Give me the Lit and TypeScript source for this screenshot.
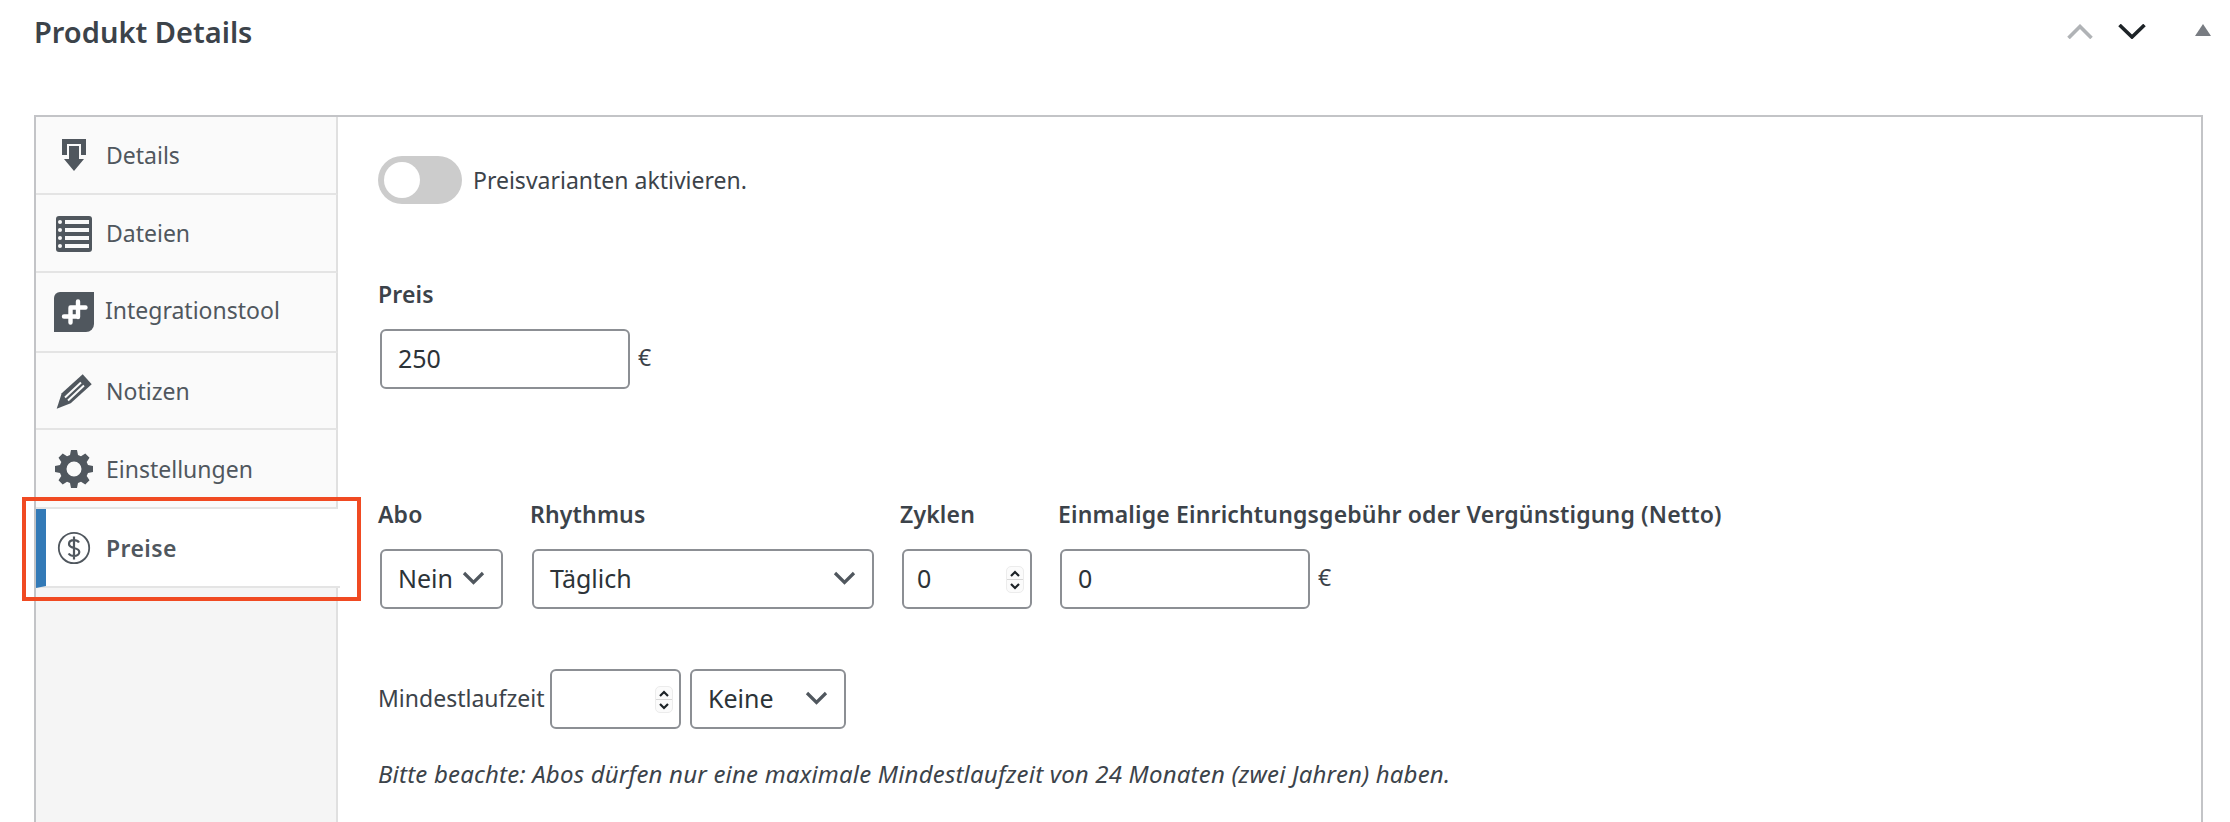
import { LitElement, html, css, svg } from "lit";
import { customElement } from "lit/decorators.js";

const chev = svg`<path d="M2 2l9.500 9.500L21 2" fill="none" stroke="#50575e" stroke-width="3.200"/>`;
const icons: Record<string, unknown> = {
  details: svg`<svg width="40" height="40" viewBox="0 0 40 40"><path fill="#50575e" d="M8 4h24v16h-5V9H13v11H8z"/><path fill="#50575e" d="M15 11h10v13h5L20 36 10 24h5z"/></svg>`,
  files: svg`<svg width="40" height="40" viewBox="0 0 40 40"><rect x="2" y="3" width="36" height="36" rx="3" fill="#50575e"/><g fill="#fafafa"><rect x="11" y="7" width="24" height="4"/><rect x="11" y="15" width="24" height="4"/><rect x="11" y="23" width="24" height="4"/><rect x="11" y="31" width="24" height="4"/><circle cx="6" cy="9" r="2"/><circle cx="6" cy="17" r="2"/><circle cx="6" cy="25" r="2"/><circle cx="6" cy="33" r="2"/></g></svg>`,
  integration: svg`<svg width="40" height="40" viewBox="0 0 40 40"><path fill="#50575e" d="M6 0h34v32a8 8 0 0 1-8 8H0V6a6 6 0 0 1 6-6z"/><path fill="none" stroke="#fff" stroke-width="4.400" stroke-linecap="round" d="M16.500 16v14.500M24 9.500V25M16.500 15.500h15M10 24.500h14"/></svg>`,
  notes: svg`<svg width="40" height="40" viewBox="0 0 40 40"><path fill="#50575e" d="M2.700 37.700L7.700 22.300 28.700 3.300 37.700 13.300 16.700 32.300z"/><path fill="none" stroke="#fafafa" stroke-width="2" d="M11 26.500L27 11.500M14 29.500L30 14.500"/></svg>`,
  settings: svg`<svg width="40" height="40" viewBox="0 0 40 40"><path fill="#50575e" fill-rule="evenodd" d="M17 3h6l1 5 3 1.300 4.300-2.800 4.200 4.200-2.800 4.300L34 18l5 1v6l-5 1-1.300 3 2.800 4.300-4.200 4.200-4.300-2.800-3 1.300-1 5h-6l-1-5-3-1.300-4.300 2.800-4.200-4.200 2.800-4.300L6 26l-5-1v-6l5-1 1.300-3-2.800-4.300 4.200-4.200 4.300 2.800 3-1.300zM20 14.500a7 7 0 1 0 0 15 7 7 0 0 0 0-15z" transform="translate(0 -2)"/></svg>`,
  price: svg`<svg width="40" height="40" viewBox="0 0 40 40"><circle cx="20" cy="20" r="15.200" fill="none" stroke="#50575e" stroke-width="1.800"/><path fill="none" stroke="#50575e" stroke-width="2.200" d="M25 14.500c-1-1.500-3-2.300-5-2.300-3 0-5 1.600-5 3.900 0 5.400 10.300 2.500 10.300 8 0 2.300-2.300 3.900-5.300 3.900-2.300 0-4.300-.8-5.400-2.500M20 8.500v23"/></svg>`,
};

const items = [
  { key: "details", label: "Details", h: 76, cls: "" },
  { key: "files", label: "Dateien", h: 76, cls: "" },
  { key: "integration", label: "Integrationstool", h: 78, cls: "raised" },
  { key: "notes", label: "Notizen", h: 75, cls: "" },
  { key: "settings", label: "Einstellungen", h: 77, cls: "" },
];

@customElement("app-root")
export class AppRoot extends LitElement {
  static styles = css`
    :host { display: block; height: 822px; overflow: hidden; background: #fff; position: relative;
      font-family: "Noto Sans", "Open Sans", sans-serif; font-size: 23px; color: #3c434a; }
    .head { height: 115px; box-sizing: border-box; padding: 15px 19px 0 34px; display: flex; align-items: flex-start; justify-content: space-between; }
    h2 { margin: 0; font-size: 29px; line-height: 34px; font-weight: 600; color: #3c434a; }
    .ctrls { display: flex; padding-top: 9px; }
    .ctrls svg { display: block; }
    .panel { margin-left: 34px; margin-right: 27px; height: 720px; box-sizing: border-box; border: 2px solid #c3c4c7; border-bottom: 0; display: flex; }
    .side { width: 302px; flex: none; display: flex; flex-direction: column; background: #fafafa; }
    .item { box-sizing: content-box; display: flex; align-items: center; border-bottom: 2px solid #e4e4e4; border-right: 2px solid #e0e0e0; color: #50575e; padding-left: 18px; gap: 12px; }
    .item svg { flex: none; display: block; }
    .item.raised { gap: 11px; }
    .item.raised span { padding-bottom: 4px; }
    .item.active { background: #fff; font-weight: 600; letter-spacing: 0.4px; margin-right: -2px; border-right: 0; border-left: 10px solid #337ab7; padding-left: 8px; position: relative; z-index: 1; }
    .fill { flex: 1; background: #f5f5f5; border-right: 2px solid #e0e0e0; }
    .main { flex: 1; padding: 39px 0 0 40px; min-width: 0; }
    .toggle-row { display: flex; align-items: center; gap: 11px; height: 48px; }
    .toggle { width: 84px; height: 48px; border-radius: 24px; background: #ccc; display: flex; align-items: center; padding-left: 6px; box-sizing: border-box; }
    .knob { width: 36px; height: 36px; border-radius: 50%; background: #fff; }
    .lab { font-weight: 600; line-height: 30px; color: #3c434a; letter-spacing: 0.16px; }
    .preis { margin-top: 75px; }
    .field { box-sizing: border-box; height: 60px; border: 2px solid #8c8f94; border-radius: 6px; background: #fff; display: flex; align-items: center; justify-content: space-between; color: #2c3338; padding: 0 16px 2px; position: relative; font-size: 25px; }
    .field.tight { padding-left: 13px; }
    .inrow { display: flex; align-items: flex-start; margin-left: 2px; margin-top: 20px; gap: 8px; }
    .eur { line-height: 56px; }
    .w250 { width: 250px; }
    .abo { margin-top: 110px; display: grid; grid-template-columns: 152px 370px 158px auto; }
    .abo .field, .abo .eurwrap { margin-top: 20px; }
    .cell { display: flex; flex-direction: column; }
    .cell .field { margin-left: 2px; }
    .eurwrap { display: flex; gap: 8px; margin-left: 2px; }
    .eurwrap .field { margin: 0; }
    .min { display: flex; align-items: center; margin-top: 60px; }
    .min .t { width: 172px; flex: none; padding-bottom: 2px; }
    .min .s { margin-left: 9px; }
    .note { font-style: italic; font-size: 24px; letter-spacing: 0.19px; margin-top: 30px; line-height: 30px; }
    .stepper { position: absolute; right: 6px; top: 15px; width: 18px; height: 27px; box-sizing: border-box; border: 1px solid #ececec; border-radius: 5px; background: #fbfbfb; display: flex; flex-direction: column; }
    .stepper span { flex: 1; display: flex; align-items: center; justify-content: center; }
    .stepper span + span { border-top: 1px solid #d8d8d8; }
    .stepper svg { display: block; }
    .chev { display: block; flex: none; }
    .mark { position: absolute; left: 22px; top: 497px; width: 339px; height: 104px; box-sizing: border-box; border: 4px solid #f04a22; pointer-events: none; z-index: 2; }
  `;

  private stepper() {
    return html`<div class="stepper">
      <span><svg width="10" height="7" viewBox="0 0 10 7"><path d="M1 6l4-4 4 4" fill="none" stroke="#1d2327" stroke-width="2.200"/></svg></span>
      <span><svg width="10" height="7" viewBox="0 0 10 7"><path d="M1 1l4 4 4-4" fill="none" stroke="#1d2327" stroke-width="2.200"/></svg></span>
    </div>`;
  }
  private chevron() {
    return html`<svg class="chev" width="23" height="14" viewBox="0 0 23 14">${chev}</svg>`;
  }

  render() {
    return html`
      <div class="head">
        <h2>Produkt Details</h2>
        <div class="ctrls">
          <svg width="26" height="15" viewBox="0 0 26 15"><path d="M1.500 14L13 2.500 24.500 14" fill="none" stroke="#b0b3b6" stroke-width="3.600"/></svg>
          <svg width="28" height="15" viewBox="0 0 28 15" style="margin-left:25px"><path d="M1.500 1L14 13 26.500 1" fill="none" stroke="#1d2327" stroke-width="3.600"/></svg>
          <svg width="16" height="12" viewBox="0 0 16 12" style="margin-left:49px"><path d="M8 0l8 12H0z" fill="#787c82"/></svg>
        </div>
      </div>
      <div class="panel">
        <div class="side">
          ${items.map((i) => html`<div class="item ${i.cls}" style="height:${i.h}px">${icons[i.key]}<span>${i.label}</span></div>`)}
          <div class="item active" style="height:77px">${icons.price}<span>Preise</span></div>
          <div class="fill"></div>
        </div>
        <div class="main">
          <div class="toggle-row"><div class="toggle"><div class="knob"></div></div><span>Preisvarianten aktivieren.</span></div>
          <div class="preis">
            <div class="lab">Preis</div>
            <div class="inrow"><div class="field w250">250</div><span class="eur">€</span></div>
          </div>
          <div class="abo">
            <div class="cell"><div class="lab">Abo</div><div class="field" style="width:123px">Nein ${this.chevron()}</div></div>
            <div class="cell"><div class="lab">Rhythmus</div><div class="field" style="width:342px">Täglich ${this.chevron()}</div></div>
            <div class="cell"><div class="lab">Zyklen</div><div class="field tight" style="width:130px">0 ${this.stepper()}</div></div>
            <div class="cell"><div class="lab">Einmalige Einrichtungsgebühr oder Vergünstigung (Netto)</div>
              <div class="eurwrap"><div class="field w250">0</div><span class="eur">€</span></div></div>
          </div>
          <div class="min">
            <span class="t">Mindestlaufzeit</span>
            <div class="field" style="width:131px">${this.stepper()}</div>
            <div class="field s" style="width:156px">Keine ${this.chevron()}</div>
          </div>
          <div class="note">Bitte beachte: Abos dürfen nur eine maximale Mindestlaufzeit von 24 Monaten (zwei Jahren) haben.</div>
        </div>
      </div>
      <div class="mark"></div>
    `;
  }
}
